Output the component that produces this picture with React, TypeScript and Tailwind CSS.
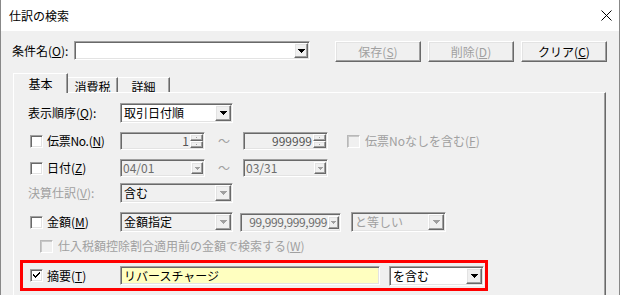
import React from "react";

const SUNKEN =
  "border border-t-[#a0a0a0] border-l-[#a0a0a0] border-r-white border-b-white shadow-[inset_1px_1px_0_#696969,inset_-1px_-1px_0_#e3e3e3]";
const RAISED =
  "border border-t-white border-l-white border-r-[#696969] border-b-[#696969] shadow-[inset_-1px_-1px_0_#a0a0a0,inset_1px_1px_0_#e3e3e3]";

function Arrow({ color = "#000000" }: { color?: string }) {
  return (
    <svg width="7" height="4" viewBox="0 0 7 4" shapeRendering="crispEdges">
      <rect x="0" y="0" width="7" height="1" fill={color} />
      <rect x="1" y="1" width="5" height="1" fill={color} />
      <rect x="2" y="2" width="3" height="1" fill={color} />
      <rect x="3" y="3" width="1" height="1" fill={color} />
    </svg>
  );
}

function SmallArrow({ color = "#a0a0a0" }: { color?: string }) {
  return (
    <svg width="5" height="3" viewBox="0 0 5 3" shapeRendering="crispEdges">
      <rect x="0" y="0" width="5" height="1" fill={color} />
      <rect x="1" y="1" width="3" height="1" fill={color} />
      <rect x="2" y="2" width="1" height="1" fill={color} />
    </svg>
  );
}

function Combo({
  box,
  btn,
  text,
  textCls = "text-black",
  arrow = "#000000",
}: {
  box: string;
  btn: string;
  text?: React.ReactNode;
  textCls?: string;
  arrow?: string;
}) {
  return (
    <div className={`${SUNKEN} ${box} flex items-stretch p-px box-border shrink-0`}>
      <div className={`flex-1 flex items-center pl-[2px] whitespace-nowrap ${textCls}`}>{text}</div>
      <div className={`${RAISED} ${btn} bg-[#f0f0f0] flex items-center justify-center`}>
        <Arrow color={arrow} />
      </div>
    </div>
  );
}

function Spinner({ value }: { value: string }) {
  return (
    <div className={`${SUNKEN} w-[85px] h-[18px] bg-[#f0f0f0] flex items-stretch p-px shrink-0`}>
      <div className="flex-1 flex items-center justify-end pr-[1px] text-[#555555]">{value}</div>
      <div className="w-[13px] flex flex-col">
        <div className={`${RAISED} flex-1 flex items-center justify-center`}>
          <div className="w-[1px] h-[1px] bg-[#a0a0a0]" />
        </div>
        <div className={`${RAISED} flex-1 flex items-center justify-center`}>
          <div className="w-[1px] h-[1px] bg-[#a0a0a0]" />
        </div>
      </div>
    </div>
  );
}

function DateBox({ value }: { value: string }) {
  return (
    <div className={`${SUNKEN} w-[85px] h-[18px] bg-[#f0f0f0] flex items-stretch p-px shrink-0`}>
      <div className="flex-1 flex items-center pl-[1px] text-[#6d6d6d]">{value}</div>
      <div className={`${RAISED} w-[12px] my-[1px] flex items-center justify-center`}>
        <SmallArrow />
      </div>
    </div>
  );
}

function Check({ checked = false, disabled = false }: { checked?: boolean; disabled?: boolean }) {
  return (
    <div
      className={
        disabled
          ? "w-[13px] h-[13px] shrink-0 border border-t-[#b8b8b8] border-l-[#b8b8b8] border-r-white border-b-white shadow-[inset_1px_1px_0_#c8c8c8] bg-[#f0f0f0]"
          : `w-[13px] h-[13px] shrink-0 ${SUNKEN} bg-white flex items-center justify-center`
      }
    >
      {checked && (
        <svg width="9" height="9" viewBox="0 0 9 9" shapeRendering="crispEdges">
          <path d="M1 3 L1 5 L3 7 L3 7 L8 2 L8 0 L3 5 Z" fill="#000" />
        </svg>
      )}
    </div>
  );
}

function Btn({ children, disabled = false }: { children: React.ReactNode; disabled?: boolean }) {
  return (
    <div
      className={`${RAISED} w-[86px] h-[21px] flex items-center justify-center ${
        disabled ? "text-[#a0a0a0]" : "text-black"
      }`}
    >
      {children}
    </div>
  );
}

export default function App() {
  return (
    <div className="w-[620px] h-[295px] overflow-hidden bg-[#f0f0f0] border-x border-[#888888] flex flex-col font-['Noto_Sans_CJK_JP','Noto_Sans_CJK_SC',sans-serif] text-[12px] leading-none text-black">
      {/* title bar */}
      <div className="h-[31px] shrink-0 bg-white flex items-center pl-[8px] pr-[7px]">
        <span>仕訳の検索</span>
        <svg className="ml-auto" width="11" height="11" viewBox="0 0 11 11">
          <path d="M0.5 0.5L10.5 10.5M10.5 0.5L0.5 10.5" stroke="#000" strokeWidth="1" />
        </svg>
      </div>

      {/* condition row */}
      <div className="mt-[10px] h-[21px] shrink-0 flex items-start pl-[11px]">
        <div className="w-[62px] h-[19px] flex items-center whitespace-nowrap">
          条件名(<span className="underline">O</span>):
        </div>
        <Combo box="w-[236px] h-[19px] bg-white" btn="w-[14px]" />
        <div className="ml-[25px] flex gap-[7px]">
          <Btn disabled>
            保存(<span className="underline">S</span>)
          </Btn>
          <Btn disabled>
            削除(<span className="underline">D</span>)
          </Btn>
          <Btn>
            クリア(<span className="underline">C</span>)
          </Btn>
        </div>
      </div>

      {/* tabs */}
      <div className="mt-[11px] h-[19px] shrink-0 flex items-end pl-[12px]">
        <div className="relative z-10 -mb-px w-[55px] h-[20px] bg-[#f0f0f0] border-t border-l border-t-white border-l-white border-r border-r-[#696969] shadow-[inset_-1px_0_0_#a0a0a0] flex items-start justify-center pt-[4px]">
          基本
        </div>
        <div className="w-[50px] h-[15px] border-t border-t-white border-r border-r-[#696969] shadow-[inset_-1px_0_0_#a0a0a0] flex items-start justify-center pt-[3px]">
          消費税
        </div>
        <div className="w-[52px] h-[15px] border-t border-t-white border-r border-r-[#696969] shadow-[inset_-1px_0_0_#a0a0a0] flex items-start justify-center pt-[3px]">
          詳細
        </div>
      </div>

      {/* panel */}
      <div className="ml-[12px] w-[593px] flex-1 border-t border-l border-t-white border-l-white border-r border-r-[#696969] shadow-[inset_-1px_0_0_#a0a0a0] pl-[14px] pt-[10px] flex flex-col">
        {/* 表示順序 */}
        <div className="h-[20px] flex items-center">
          <div className="w-[92px] whitespace-nowrap">
            表示順序(<span className="underline">Q</span>):
          </div>
          <Combo box="w-[113px] h-[20px] bg-white" btn="w-[16px]" text="取引日付順" />
        </div>

        {/* 伝票No */}
        <div className="mt-[9px] h-[18px] flex items-center">
          <div className="w-[92px] flex items-center pl-[2px]">
            <Check />
            <span className="ml-[4px] whitespace-nowrap tracking-[-0.3px]">
              伝票No.(<span className="underline">N</span>)
            </span>
          </div>
          <Spinner value="1" />
          <div className="w-[38px] text-center text-[#a0a0a0]">～</div>
          <Spinner value="999999" />
          <div className="ml-[19px] flex items-center text-[#a0a0a0]">
            <Check disabled />
            <span className="ml-[5px] whitespace-nowrap">
              伝票Noなしを含む(<span className="underline">F</span>)
            </span>
          </div>
        </div>

        {/* 日付 */}
        <div className="mt-[9px] h-[18px] flex items-center">
          <div className="w-[92px] flex items-center pl-[2px]">
            <Check />
            <span className="ml-[4px] whitespace-nowrap">
              日付(<span className="underline">Z</span>)
            </span>
          </div>
          <DateBox value="04/01" />
          <div className="w-[38px] text-center text-[#a0a0a0]">～</div>
          <DateBox value="03/31" />
        </div>

        {/* 決算仕訳 */}
        <div className="mt-[6px] h-[20px] flex items-center">
          <div className="w-[92px] whitespace-nowrap text-[#a0a0a0]">
            決算仕訳(<span className="underline">V</span>):
          </div>
          <Combo box="w-[113px] h-[20px] bg-[#f0f0f0]" btn="w-[16px]" text="含む" arrow="#a0a0a0" />
        </div>

        {/* 金額 */}
        <div className="mt-[9px] h-[20px] flex items-center">
          <div className="w-[92px] flex items-center pl-[2px]">
            <Check />
            <span className="ml-[4px] whitespace-nowrap">
              金額(<span className="underline">M</span>)
            </span>
          </div>
          <Combo box="w-[113px] h-[20px] bg-[#f0f0f0]" btn="w-[16px]" text="金額指定" arrow="#a0a0a0" />
          <div className={`${SUNKEN} ml-[7px] w-[101px] h-[19px] bg-[#f0f0f0] flex items-stretch p-px shrink-0`}>
            <div className="flex-1 flex items-center justify-end pr-[1px] text-[#6d6d6d] tracking-[-0.4px] whitespace-nowrap overflow-hidden">
              99,999,999,999
            </div>
            <div className={`${RAISED} w-[11px] my-[1px] flex items-center justify-center`}>
              <SmallArrow />
            </div>
          </div>
          <div className="ml-[10px]">
            <Combo
              box="w-[95px] h-[20px] bg-[#f0f0f0]"
              btn="w-[16px]"
              text="と等しい"
              textCls="text-[#a0a0a0]"
              arrow="#a0a0a0"
            />
          </div>
        </div>

        {/* 仕入税額控除 */}
        <div className="mt-[6px] h-[16px] flex items-center pl-[12px] text-[#a0a0a0]">
          <Check disabled />
          <span className="ml-[5px] whitespace-nowrap">
            仕入税額控除割合適用前の金額で検索する(<span className="underline">W</span>)
          </span>
        </div>

        {/* 摘要 (highlighted) */}
        <div className="mt-[6px] -ml-[8px] w-[468px] h-[31px] border-[3px] border-[#ff0000] flex items-center pl-[7px]">
          <div className="w-[90px] flex items-center">
            <Check checked />
            <span className="ml-[4px] whitespace-nowrap">
              摘要(<span className="underline">T</span>)
            </span>
          </div>
          <div className={`${SUNKEN} w-[260px] h-[19px] bg-[#ffffc0] flex items-center pl-[3px] shrink-0`}>
            リバースチャージ
          </div>
          <div className="ml-[9px]">
            <Combo box="w-[95px] h-[20px] bg-white" btn="w-[16px]" text="を含む" />
          </div>
        </div>
      </div>
    </div>
  );
}
